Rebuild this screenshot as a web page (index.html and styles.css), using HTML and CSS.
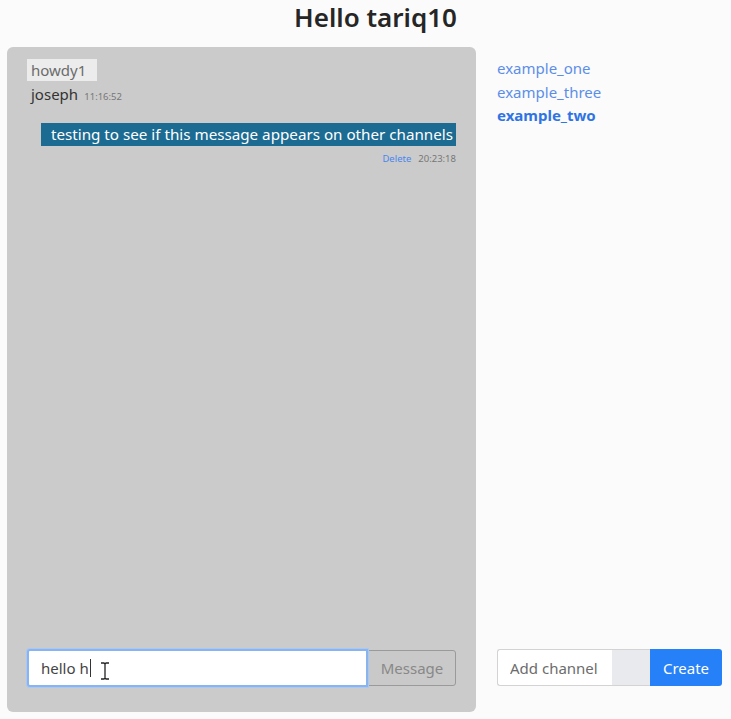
FILE: index.html
```html
<!DOCTYPE html>
<html>
<head>
<meta charset="utf-8">
<link rel="stylesheet" href="styles.css">
</head>
<body>
<h1 class="title">Hello tariq10</h1>
<div class="main">
  <section class="chat">
    <div class="messages">
      <div class="channel-tag">howdy1</div>
      <div class="msg-other">
        <span class="author">joseph</span>
        <span class="time">11:16:52</span>
      </div>
      <div class="msg-own">
        <div class="bubble">testing to see if this message appears on other channels</div>
        <div class="meta"><a class="delete" href="#">Delete</a><span class="time">20:23:18</span></div>
      </div>
    </div>
    <form class="send-group">
      <div class="input-wrap">
        <input class="send-input" type="text" value="hello h">
        <span class="caret"></span>
        <svg class="ibeam" width="10" height="18" viewBox="0 0 10 18"><path d="M1 1h3l1 1 1-1h3M5 2v14M1 17h3l1-1 1 1h3" fill="none" stroke="#222" stroke-width="1.3"/></svg>
      </div>
      <button class="send-btn" type="button">Message</button>
    </form>
  </section>
  <aside class="side">
    <nav class="channels">
      <a href="#" class="channel">example_one</a>
      <a href="#" class="channel">example_three</a>
      <a href="#" class="channel active">example_two</a>
    </nav>
    <form class="create-group">
      <input class="create-input" type="text" placeholder="Add channel">
      <span class="create-addon"></span>
      <button class="create-btn" type="button">Create</button>
    </form>
  </aside>
</div>
</body>
</html>
```

FILE: styles.css
```css
* { box-sizing: border-box; }
html, body { margin: 0; padding: 0; }
body {
  background: #fbfbfb;
  font-family: "Noto Sans", "Open Sans", sans-serif;
  color: #212529;
  width: 731px;
  height: 719px;
  overflow: hidden;
}
.title {
  margin: 0;
  height: 47px;
  padding-top: 0;
  line-height: 34px;
  text-align: center;
  font-size: 26px;
  font-weight: 600;
  padding-left: 20px;
  color: #262626;
}
.main {
  display: flex;
  padding-left: 7px;
  gap: 21px;
}
.chat {
  width: 469px;
  height: 665px;
  background: #cbcbcb;
  border-radius: 6px;
  display: flex;
  flex-direction: column;
  justify-content: space-between;
  padding: 12px 20px 25px 20px;
}
.messages { display: flex; flex-direction: column; }
.channel-tag {
  align-self: flex-start;
  background: #ececec;
  color: #6b6b6b;
  font-size: 15px;
  line-height: 22px;
  padding: 0 11px 0 4px;
}
.msg-other {
  padding-left: 4px;
  margin-top: 2px;
  line-height: 22px;
}
.author { font-size: 15px; color: #333; }
.time { font-size: 9.5px; color: #777; margin-left: 2px; }
.msg-own {
  margin-top: 15px;
  display: flex;
  flex-direction: column;
  align-items: flex-end;
  margin-right: 0;
}
.bubble {
  background: #1c6b93;
  color: #fff;
  font-size: 15.2px;
  line-height: 23px;
  padding: 0 3px 0 10px;
}
.meta { line-height: 16px; margin-top: 2px; margin-right: 0; }
.delete { font-size: 9.5px; color: #4a86ee; text-decoration: none; margin-right: 5px; }
.send-group {
  display: flex;
  height: 38px;
  margin: 0;
}
.input-wrap { position: relative; flex: 0 0 341px; }
.send-input {
  width: 100%;
  height: 38px;
  border: 2px solid #8ab4ee;
  border-radius: 3px 0 0 3px;
  box-shadow: 0 0 0 1px #a9c8f3;
  background: #fff;
  font-family: inherit;
  font-size: 15px;
  color: #444;
  padding: 0 12px;
  outline: none;
}
.caret {
  position: absolute;
  left: 63px;
  top: 10px;
  width: 1px;
  height: 18px;
  background: #333;
}
.ibeam { position: absolute; left: 73px; top: 13px; }
.send-btn {
  flex: 1;
  height: 36px;
  margin-top: 1px;
  background: #c9c9c9;
  border: 1px solid #9a9a9a;
  border-radius: 0 3px 3px 0;
  color: #888;
  font-family: inherit;
  font-size: 15px;
  padding: 0 10px;
}
.side {
  width: 225px;
  height: 665px;
  display: flex;
  flex-direction: column;
  justify-content: space-between;
  padding-bottom: 26px;
}
.channels {
  display: flex;
  flex-direction: column;
  padding-top: 10px;
}
.channel {
  color: #5b8ee8;
  text-decoration: none;
  font-size: 15px;
  line-height: 23.5px;
  align-self: flex-start;
}
.channel.active { font-weight: 700; color: #2f74e4; }
.create-group { display: flex; height: 37px; margin: 0; }
.create-input {
  width: 115px;
  height: 37px;
  border: 1px solid #d3d3d3;
  border-right: none;
  border-radius: 3px 0 0 3px;
  background: #fff;
  font-family: inherit;
  font-size: 15px;
  padding: 0 12px;
  outline: none;
}
.create-input::placeholder { color: #6c6c6c; }
.create-addon {
  width: 38px;
  height: 37px;
  background: #e8eaed;
  border-top: 1px solid #d3d3d3;
  border-bottom: 1px solid #d3d3d3;
}
.create-btn {
  width: 72px;
  height: 37px;
  background: #2680f8;
  border: none;
  border-radius: 0 3px 3px 0;
  color: #fff;
  font-family: inherit;
  font-size: 15px;
  padding: 0;
}
```
